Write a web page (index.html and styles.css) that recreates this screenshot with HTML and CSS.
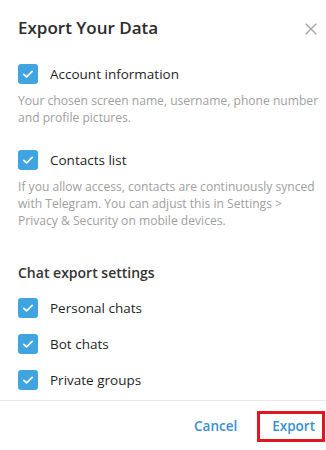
FILE: index.html
```html
<!DOCTYPE html>
<html>
<head>
<meta charset="utf-8">
<link rel="stylesheet" href="styles.css">
</head>
<body>
<div class="dialog">
  <div class="header">
    <div class="title">Export Your Data</div>
    <svg class="close" width="12" height="12" viewBox="0 0 12 12"><path d="M0.7 0.7 L11.3 11.3 M11.3 0.7 L0.7 11.3" stroke="#a3a3a3" stroke-width="1.3" fill="none"/></svg>
  </div>
  <div class="content">
    <div class="option">
      <div class="row">
        <span class="cb"><svg width="20" height="20" viewBox="0 0 20 20"><path d="M5.8 10.3 L8.6 12.9 L14.2 7.4" stroke="#fff" stroke-width="1.7" fill="none" stroke-linecap="round" stroke-linejoin="round"/></svg></span>
        <span class="label">Account information</span>
      </div>
      <p class="desc">Your chosen screen name, username, phone number and profile pictures.</p>
    </div>
    <div class="option second">
      <div class="row">
        <span class="cb"><svg width="20" height="20" viewBox="0 0 20 20"><path d="M5.8 10.3 L8.6 12.9 L14.2 7.4" stroke="#fff" stroke-width="1.7" fill="none" stroke-linecap="round" stroke-linejoin="round"/></svg></span>
        <span class="label">Contacts list</span>
      </div>
      <p class="desc">If you allow access, contacts are continuously synced with Telegram. You can adjust this in Settings &gt; Privacy &amp; Security on mobile devices.</p>
    </div>
    <div class="section">Chat export settings</div>
    <div class="list">
      <div class="row">
        <span class="cb"><svg width="20" height="20" viewBox="0 0 20 20"><path d="M5.8 10.3 L8.6 12.9 L14.2 7.4" stroke="#fff" stroke-width="1.7" fill="none" stroke-linecap="round" stroke-linejoin="round"/></svg></span>
        <span class="label">Personal chats</span>
      </div>
      <div class="row">
        <span class="cb"><svg width="20" height="20" viewBox="0 0 20 20"><path d="M5.8 10.3 L8.6 12.9 L14.2 7.4" stroke="#fff" stroke-width="1.7" fill="none" stroke-linecap="round" stroke-linejoin="round"/></svg></span>
        <span class="label">Bot chats</span>
      </div>
      <div class="row">
        <span class="cb"><svg width="20" height="20" viewBox="0 0 20 20"><path d="M5.8 10.3 L8.6 12.9 L14.2 7.4" stroke="#fff" stroke-width="1.7" fill="none" stroke-linecap="round" stroke-linejoin="round"/></svg></span>
        <span class="label">Private groups</span>
      </div>
    </div>
  </div>
  <div class="footer">
    <span class="btn cancel">Cancel</span>
    <span class="btn export">Export</span>
  </div>
</div>
</body>
</html>
```
FILE: styles.css
```css
html, body {
  margin: 0;
  padding: 0;
  background: #fff;
}
body {
  font-family: "Open Sans", "Noto Sans", sans-serif;
  width: 326px;
  height: 450px;
  overflow: hidden;
}
.dialog {
  display: flex;
  flex-direction: column;
}
.header {
  display: flex;
  justify-content: space-between;
  align-items: center;
  padding: 16px 9px 0 18px;
  height: 24px;
}
.title {
  font-size: 17px;
  font-weight: 600;
  line-height: 24px;
  color: #2b2b2b;
}
.close {
  display: block;
  margin-top: 2px;
}
.content {
  padding: 24px 2px 0 18px;
}
.row {
  display: flex;
  align-items: center;
  height: 20px;
}
.cb {
  width: 20px;
  height: 20px;
  border-radius: 3px;
  background: #40a4e0;
  display: flex;
  flex: none;
}
.label {
  margin-left: 12px;
  font-size: 13.5px;
  line-height: 20px;
  color: #1f1f1f;
}
.desc {
  margin: 8px 0 0 0;
  font-size: 12.1px;
  line-height: 17px;
  color: #a0a0a0;
}
.second {
  margin-top: 24px;
}
.section {
  margin-top: 34px;
  font-size: 14px;
  font-weight: 600;
  line-height: 20px;
  color: #333;
}
.list {
  margin-top: 15px;
  display: flex;
  flex-direction: column;
  gap: 16px;
}
.footer {
  margin-top: 10px;
  border-top: 1px solid #e8e8e8;
  display: flex;
  justify-content: flex-end;
  align-items: center;
  padding: 10px 1px 0 0;
  gap: 20px;
}
.btn {
  font-size: 13.5px;
  font-weight: 600;
  color: #3a8fd0;
  line-height: 25px;
}
.export {
  border: 3px solid #e2161f;
  padding: 0 7px 0 12px;
}
```
